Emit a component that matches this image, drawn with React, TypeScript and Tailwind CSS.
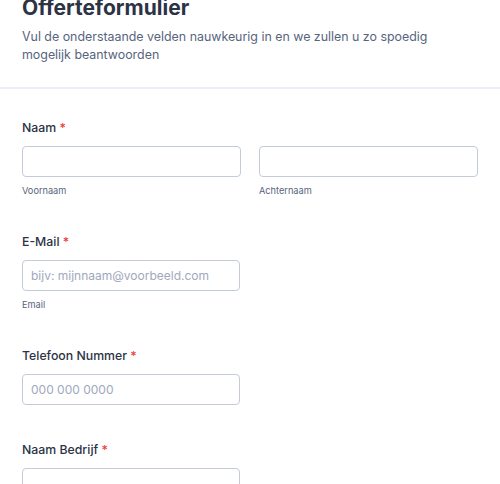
// App.tsx
const FONT = "font-['Inter','Noto_Sans',sans-serif]";

function Label({ text }: { text: string }) {
  return (
    <label className="block text-[12.3px] font-medium leading-[16px] text-[#2c3345] mb-[10px]">
      {text} <span className="text-[#f23a3c]">*</span>
    </label>
  );
}

function Field({ placeholder, sub }: { placeholder?: string; sub?: string }) {
  return (
    <div className="flex flex-col">
      <input
        type="text"
        placeholder={placeholder}
        className="h-[31px] w-full rounded-[4px] border border-[#c3cad8] bg-white px-[8px] text-[12px] text-[#2c3345] placeholder:text-[#a0a8bd] outline-none"
      />
      {sub && (
        <span className="mt-[8px] text-[9.2px] leading-[12px] text-[#57647e]">
          {sub}
        </span>
      )}
    </div>
  );
}

export default function App() {
  return (
    <div className={`${FONT} w-[500px] h-[484px] overflow-hidden bg-white`}>
      {/* Header */}
      <div className="px-[22px] -mt-[7px] pb-[23px] border-b-2 border-[#eceef5]">
        <h1 className="text-[21px] font-bold leading-[30px] text-[#2c3345]">
          Offerteformulier
        </h1>
        <p className="mt-[5px] max-w-[418px] text-[12.4px] leading-[18px] text-[#57647e]">
          Vul de onderstaande velden nauwkeurig in en we zullen u zo spoedig
          mogelijk beantwoorden
        </p>
      </div>

      {/* Form */}
      <form onSubmit={(e) => e.preventDefault()} className="px-[22px] pt-[31px]">
        {/* Naam */}
        <div className="mb-[37px]">
          <Label text="Naam" />
          <div className="grid grid-cols-2 gap-[18px]">
            <Field sub="Voornaam" />
            <Field sub="Achternaam" />
          </div>
        </div>

        {/* E-Mail */}
        <div className="mb-[37px] w-[218px]">
          <Label text="E-Mail" />
          <Field placeholder="bijv: mijnnaam@voorbeeld.com" sub="Email" />
        </div>

        {/* Telefoon */}
        <div className="mb-[37px] w-[218px]">
          <Label text="Telefoon Nummer" />
          <Field placeholder="000 000 0000" />
        </div>

        {/* Bedrijf */}
        <div className="w-[218px]">
          <Label text="Naam Bedrijf" />
          <Field />
        </div>
      </form>
    </div>
  );
}
